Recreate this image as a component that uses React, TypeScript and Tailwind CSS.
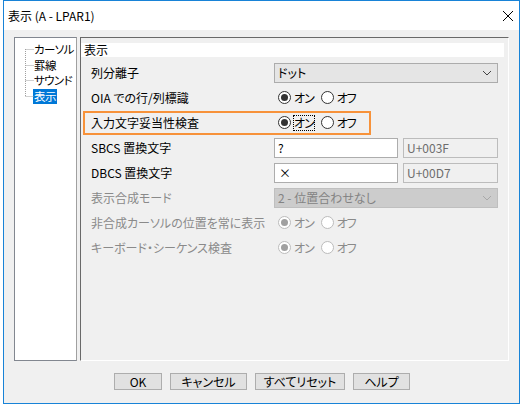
import React from "react";

const font = {
  fontFamily: '"Noto Sans CJK JP", "Liberation Sans", sans-serif',
};

function Radio({ checked, disabled }: { checked?: boolean; disabled?: boolean }) {
  const ring = disabled ? "border-[#bcbcbc]" : "border-[#333333]";
  const dot = disabled ? "bg-[#a0a0a0]" : "bg-[#333333]";
  return (
    <span className={`w-[13px] h-[13px] rounded-full border ${ring} bg-white flex items-center justify-center`}>
      {checked && <span className={`w-[7px] h-[7px] rounded-full ${dot}`} />}
    </span>
  );
}

function OnOff({ disabled, focus }: { disabled?: boolean; focus?: boolean }) {
  const txt = disabled ? "text-[#8a8a8a]" : "text-black";
  return (
    <div className={`flex items-center ${txt}`}>
      <Radio checked disabled={disabled} />
      <span className={`ml-[3px] leading-[14px] tracking-[-1px] ${focus ? "outline outline-1 outline-dotted outline-black" : ""}`}>オン</span>
      <span className="ml-[7px]">
        <Radio disabled={disabled} />
      </span>
      <span className="ml-[3px] tracking-[-1px]">オフ</span>
    </div>
  );
}

function Chevron({ color }: { color: string }) {
  return (
    <svg width="10" height="6" viewBox="0 0 10 6">
      <path d="M1 1 L5 5 L9 1" fill="none" stroke={color} strokeWidth="1" />
    </svg>
  );
}

function Row({ label, disabled, children, highlight }: { label: string; disabled?: boolean; children: React.ReactNode; highlight?: boolean }) {
  return (
    <div className="relative h-[25px] flex items-center">
      <div className={`w-[193px] pl-[10px] whitespace-nowrap ${disabled ? "text-[#8a8a8a]" : "text-black"}`}>{label}</div>
      <div className="flex items-center">{children}</div>
      {highlight && (
        <div className="absolute left-[2px] top-[1px] w-[288px] h-[24px] border-2 border-[#f7923a] pointer-events-none" />
      )}
    </div>
  );
}

export default function App() {
  return (
    <div className="w-[523px] h-[407px] bg-white pl-[3px] text-[12px] [font-feature-settings:'palt']" style={font}>
      <div className="w-[517px] h-[404px] border border-[#1883d7] bg-[#f0f0f0] flex flex-col">
        {/* title bar */}
        <div className="h-[29px] bg-white flex items-center justify-between pl-[4px] pr-[5px]">
          <span className="text-[12px] text-black">表示 (A - LPAR1)</span>
          <svg width="12" height="12" viewBox="0 0 12 12">
            <path d="M1 1 L11 11 M11 1 L1 11" stroke="#000" strokeWidth="1" />
          </svg>
        </div>

        <div className="flex-1 flex flex-col pl-[10px] pt-[7px]">
          <div className="flex h-[324px]">
            {/* tree */}
            <div className="relative w-[63px] h-full bg-white border border-[#828790] border-r-[#a0a0a0]">
              <svg className="absolute left-0 top-0" width="30" height="70">
                <path d="M10.5 11 V59 M10.5 11.5 H19 M10.5 27.5 H19 M10.5 42.5 H19 M10.5 58.5 H19" stroke="#a0a0a0" strokeDasharray="1 1" fill="none" />
              </svg>
              <div className="flex flex-col pl-[19px] pt-[4px] leading-[15.5px] text-[11.5px] tracking-[-0.6px] text-black whitespace-nowrap">
                <span>カーソル</span>
                <span>罫線</span>
                <span>サウンド</span>
                <span className="self-start bg-[#0078d7] text-white px-[1px] -ml-[1px]">表示</span>
              </div>
            </div>

            {/* settings panel */}
            <div className="ml-[3px] w-[429px] h-full border-t border-l border-[#696969] border-r border-r-white border-b border-b-white pt-[5px]">
              <div className="w-[423px] h-[14px] bg-white flex items-center pl-[3px] leading-[14px]">表示</div>
              <div className="pt-[3px]">
                <Row label="列分離子">
                  <div className="w-[224px] h-[20px] bg-[#e5e5e5] border border-[#acacac] flex items-center justify-between pl-[3px] pr-[5px]">
                    <span>ドット</span>
                    <Chevron color="#444" />
                  </div>
                </Row>
                <Row label="OIA での行/列標識">
                  <div className="pl-[4px]"><OnOff /></div>
                </Row>
                <Row label="入力文字妥当性検査" highlight>
                  <div className="pl-[4px]"><OnOff focus /></div>
                </Row>
                <Row label="SBCS 置換文字">
                  <div className="w-[124px] h-[20px] bg-white border border-[#adadad] flex items-center pl-[3px]">?</div>
                  <div className="ml-[5px] w-[95px] h-[20px] border border-[#bcbcbc] flex items-center pl-[3px] text-[#6d6d6d]">U+003F</div>
                </Row>
                <Row label="DBCS 置換文字">
                  <div className="w-[124px] h-[20px] bg-white border border-[#adadad] flex items-center pl-[4px]">×</div>
                  <div className="ml-[5px] w-[95px] h-[20px] border border-[#bcbcbc] flex items-center pl-[3px] text-[#6d6d6d]">U+00D7</div>
                </Row>
                <Row label="表示合成モード" disabled>
                  <div className="w-[224px] h-[20px] bg-[#cccccc] border border-[#bfbfbf] flex items-center justify-between pl-[3px] pr-[5px] text-[#838383]">
                    <span>2 - 位置合わせなし</span>
                    <Chevron color="#a8a8a8" />
                  </div>
                </Row>
                <Row label="非合成カーソルの位置を常に表示" disabled>
                  <div className="pl-[4px]"><OnOff disabled /></div>
                </Row>
                <Row label="キーボード・シーケンス検査" disabled>
                  <div className="pl-[4px]"><OnOff disabled /></div>
                </Row>
              </div>
            </div>
          </div>

          {/* buttons */}
          <div className="flex pl-[100px] pt-[12px] gap-[8px]">
            <button className="w-[46px] h-[15px] box-content bg-[#e1e1e1] border border-[#adadad] leading-[13px]">OK</button>
            <button className="w-[75px] h-[15px] box-content bg-[#e1e1e1] border border-[#adadad] leading-[13px]">キャンセル</button>
            <button className="w-[88px] h-[15px] box-content bg-[#e1e1e1] border border-[#adadad] leading-[13px]">すべてリセット</button>
            <button className="w-[55px] h-[15px] box-content bg-[#e1e1e1] border border-[#adadad] leading-[13px]">ヘルプ</button>
          </div>
        </div>
      </div>
    </div>
  );
}
